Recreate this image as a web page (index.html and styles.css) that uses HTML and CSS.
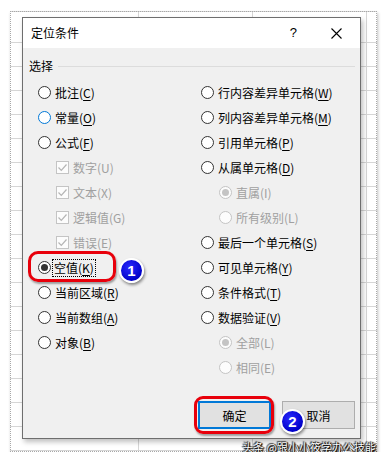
FILE: index.html
```html
<!DOCTYPE html>
<html lang="zh-CN">
<head>
    <meta charset="UTF-8">
    <title>定位条件</title>
    <link rel="stylesheet" href="styles.css">
</head>
<body>

<div class="sheet">
    <div class="dialog">
        <div class="titlebar">
            <span class="title">定位条件</span>
            <span class="help">?</span>
            <svg class="close" width="11" height="11" viewBox="0 0 11 11">
                <path d="M0.5 0.5 L10.5 10.5 M10.5 0.5 L0.5 10.5" stroke="#000" stroke-width="1.1" fill="none"/>
            </svg>
        </div>

        <div class="body">
            <div class="group-head">
                <span>选择</span>
                <span class="group-line"></span>
            </div>

            <div class="options">
                <div class="col">
                    <div class="item"><span class="radio"></span>批注(<u>C</u>)</div>
                    <div class="item"><span class="radio hover"></span>常量(<u>O</u>)</div>
                    <div class="item"><span class="radio"></span>公式(<u>F</u>)</div>
                    <div class="item sub off"><span class="check"><svg width="11" height="11" viewBox="0 0 11 11"><path d="M1.5 5.5 L4.3 8.3 L9.5 2.5" stroke="#b5b5b5" stroke-width="1.2" fill="none"/></svg></span>数字(U)</div>
                    <div class="item sub off"><span class="check"><svg width="11" height="11" viewBox="0 0 11 11"><path d="M1.5 5.5 L4.3 8.3 L9.5 2.5" stroke="#b5b5b5" stroke-width="1.2" fill="none"/></svg></span>文本(X)</div>
                    <div class="item sub off"><span class="check"><svg width="11" height="11" viewBox="0 0 11 11"><path d="M1.5 5.5 L4.3 8.3 L9.5 2.5" stroke="#b5b5b5" stroke-width="1.2" fill="none"/></svg></span>逻辑值(G)</div>
                    <div class="item sub off"><span class="check"><svg width="11" height="11" viewBox="0 0 11 11"><path d="M1.5 5.5 L4.3 8.3 L9.5 2.5" stroke="#b5b5b5" stroke-width="1.2" fill="none"/></svg></span>错误(E)</div>
                    <div class="item marked">
                        <span class="radio on"></span><span class="focus">空值(<u>K</u>)</span>
                        <span class="ring ring-one"></span>
                        <span class="badge badge-one">1</span>
                    </div>
                    <div class="item"><span class="radio"></span>当前区域(<u>R</u>)</div>
                    <div class="item"><span class="radio"></span>当前数组(<u>A</u>)</div>
                    <div class="item"><span class="radio"></span>对象(<u>B</u>)</div>
                </div>
                <div class="col">
                    <div class="item"><span class="radio"></span>行内容差异单元格(<u>W</u>)</div>
                    <div class="item"><span class="radio"></span>列内容差异单元格(<u>M</u>)</div>
                    <div class="item"><span class="radio"></span>引用单元格(<u>P</u>)</div>
                    <div class="item"><span class="radio"></span>从属单元格(<u>D</u>)</div>
                    <div class="item sub off"><span class="radio on"></span>直属(I)</div>
                    <div class="item sub off"><span class="radio"></span>所有级别(L)</div>
                    <div class="item"><span class="radio"></span>最后一个单元格(<u>S</u>)</div>
                    <div class="item"><span class="radio"></span>可见单元格(<u>Y</u>)</div>
                    <div class="item"><span class="radio"></span>条件格式(<u>T</u>)</div>
                    <div class="item"><span class="radio"></span>数据验证(<u>V</u>)</div>
                    <div class="item sub off"><span class="radio on"></span>全部(L)</div>
                    <div class="item sub off"><span class="radio"></span>相同(E)</div>
                </div>
            </div>

            <div class="buttons">
                <div class="btn-wrap">
                    <button class="btn default">确定</button>
                    <span class="ring ring-two"></span>
                </div>
                <div class="btn-wrap">
                    <button class="btn">取消</button>
                    <span class="badge badge-two">2</span>
                </div>
            </div>
        </div>
    </div>
    <span class="watermark">头条 @跟小小筱学办公技能</span>
</div>

</body>
</html>
```

FILE: styles.css
```css
* {
    box-sizing: border-box;
}

body {
    margin: 0;
    background: #fff;
    font-family: "Noto Sans CJK SC", "Noto Sans", sans-serif;
    font-size: 12px;
    color: #000;
}

.sheet {
    position: relative;
    margin: 11px 0 0 10px;
    width: 367px;
    height: 441px;
    padding: 5px 0 0 11px;
    border: 1px dotted #a8a8a8;
    background-color: #fff;
    background-image:
        repeating-linear-gradient(to right, transparent 0 113px, #d6d6d6 113px 114px),
        repeating-linear-gradient(to bottom, transparent 0 23px, #d6d6d6 23px 24px);
    background-position: 14px 0, 0 7px;
    box-shadow: 1px 2px 3px rgba(0, 0, 0, 0.25);
}

.dialog {
    width: 339px;
    height: 422px;
    border: 1px solid #6e6e6e;
    background: #f0f0f0;
    display: flex;
    flex-direction: column;
    box-shadow: 2px 3px 5px rgba(0, 0, 0, 0.25);
}

.titlebar {
    height: 30px;
    background: #fff;
    display: flex;
    align-items: center;
    padding-left: 8px;
    line-height: 16px;
}

.title {
    flex: 1;
}

.help {
    font-family: "Liberation Sans", sans-serif;
    font-size: 13px;
    margin-right: 34px;
}

.close {
    margin-right: 18px;
}

.body {
    flex: 1;
    display: flex;
    flex-direction: column;
    padding: 10px 5px 9px 6px;
}

.group-head {
    display: flex;
    align-items: center;
    height: 16px;
    line-height: 16px;
}

.group-line {
    flex: 1;
    margin-left: 5px;
    border-top: 1px solid #dcdcdc;
}

.options {
    display: grid;
    grid-template-columns: 163px 1fr;
    margin-top: 6px;
    padding-left: 9px;
}

.col {
    display: flex;
    flex-direction: column;
}

.item {
    position: relative;
    height: 25px;
    display: flex;
    align-items: center;
    line-height: 16px;
    white-space: nowrap;
}

.item u {
    text-decoration-thickness: 1px;
    text-underline-offset: 2px;
}

.sub {
    padding-left: 18px;
}

.off {
    color: #a0a0a0;
}

.radio {
    width: 13px;
    height: 13px;
    margin-right: 4px;
    border: 1px solid #333;
    border-radius: 50%;
    background: #fff;
    display: flex;
    align-items: center;
    justify-content: center;
    flex: none;
}

.radio.hover {
    border-color: #0078d7;
}

.radio.on::after {
    content: "";
    width: 7px;
    height: 7px;
    border-radius: 50%;
    background: #333;
}

.off .radio {
    border-color: #c4c4c4;
    background: #fcfcfc;
}

.off .radio.on::after {
    background: #c4c4c4;
}

.check {
    width: 13px;
    height: 13px;
    margin-right: 4px;
    border: 1px solid #c4c4c4;
    background: #fcfcfc;
    display: flex;
    align-items: center;
    justify-content: center;
    flex: none;
}

.focus {
    outline: 1px dotted #000;
    outline-offset: 0;
    padding: 0 1px;
    margin-left: -2px;
}

.ring {
    position: absolute;
    border: 3px solid #e8000b;
    box-shadow: 1px 2px 2px rgba(0, 0, 0, 0.35);
    pointer-events: none;
}

.ring-one {
    left: -10px;
    top: -4px;
    width: 88px;
    height: 31px;
    border-radius: 10px;
}

.badge {
    position: absolute;
    width: 25px;
    height: 25px;
    border-radius: 50%;
    border: 2px solid #fff;
    background: radial-gradient(circle at 40% 35%, #2a2aff, #0000c8 70%);
    box-shadow: 1px 2px 3px rgba(0, 0, 0, 0.45);
    color: #fff;
    font-family: "Liberation Sans", sans-serif;
    font-weight: bold;
    font-size: 15px;
    line-height: 21px;
    text-align: center;
}

.badge-one {
    left: 81px;
    top: 3px;
}

.buttons {
    margin-top: auto;
    display: flex;
    justify-content: flex-end;
    gap: 11px;
}

.btn-wrap {
    position: relative;
}

.btn {
    display: block;
    width: 73px;
    height: 28px;
    border: 1px solid #adadad;
    background: #e1e1e1;
    font-family: "Noto Sans CJK SC", sans-serif;
    font-size: 12px;
    color: #000;
    padding: 0;
}

.btn.default {
    border: 2px solid #0078d7;
}

.ring-two {
    left: -4px;
    top: -5px;
    width: 80px;
    height: 38px;
    border-radius: 9px;
}

.badge-two {
    left: -2px;
    top: 8px;
}

.watermark {
    position: absolute;
    right: 0;
    bottom: -3px;
    color: #fff;
    font-size: 11px;
    line-height: 14px;
    text-shadow: 0 0 1px #000, 1px 1px 1px #000, -1px -1px 1px #333, 1px 0 1px #000;
}
```
